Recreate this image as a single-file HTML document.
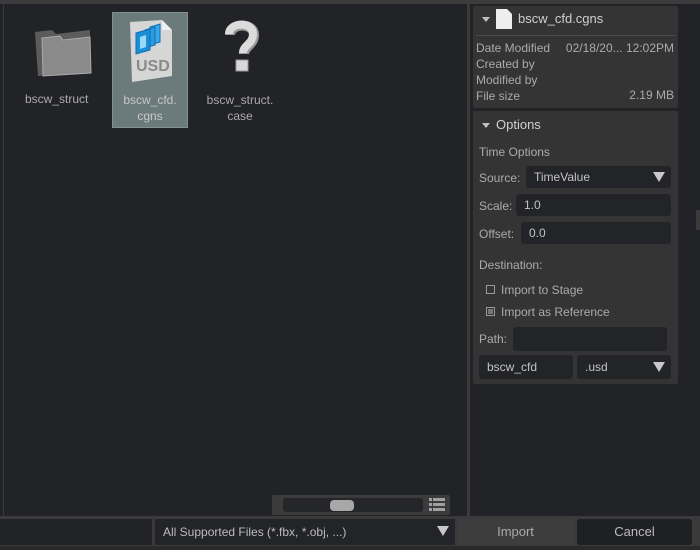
<!DOCTYPE html>
<html><head><style>
*{box-sizing:border-box;margin:0;padding:0}
body{width:700px;height:550px;background:#3a3a3a;font-family:"Liberation Sans",sans-serif;font-size:12px;color:#b8b8b8;position:relative;overflow:hidden}
.a{position:absolute}
.main{left:4px;top:4px;width:463px;height:512px;background:#222326}
.right{left:470px;top:4px;width:224px;height:512px;background:#222326}
.panel{background:#343434;border-radius:2px}
.lbl{font-size:12px;color:#ababab}
.inp{background:#232427;border-radius:3px;color:#c4c4c4;padding-left:8px;line-height:22px}
.tri{width:0;height:0;border-left:6px solid transparent;border-right:6px solid transparent;border-top:10px solid #c8c8c8}
.stri{width:0;height:0;border-left:4px solid transparent;border-right:4px solid transparent;border-top:5px solid #c0c0c0}
</style></head><body>
<div class="a" style="left:0;top:0;width:700px;height:4px;background:#3c3c3c"></div>
<div class="a main"></div>
<div class="a" style="left:0;top:4px;width:3px;height:512px;background:#222326"></div>
<div class="a right"></div>
<div class="a" style="left:694px;top:4px;width:6px;height:512px;background:#222326"></div>
<div class="a" style="left:696px;top:210px;width:4px;height:20px;background:#3a3a3a"></div>

<!-- files -->
<div class="a" style="left:112px;top:12px;width:76px;height:116px;background:#6b7a7b;border:1px solid #829293"></div>
<svg class="a" style="left:30px;top:22px" width="68" height="60" viewBox="0 0 68 60">
<path d="M5 10 L22 8 L26 12 L60 8 L60 50 L8 54 Z" fill="#5c5c5c"/>
<path d="M12 16 L30 14 L33 18 L60 15 L61 51 L13 54 Z" fill="#8a8a8a"/>
<path d="M12 16 L30 14 L33 18 L60 15 L61 51 L13 54 Z" fill="none" stroke="#aaa" stroke-width="1"/>
</svg>
<svg class="a" style="left:124px;top:18px" width="54" height="66" viewBox="0 0 54 66">
<path d="M6 4 L38 2 L48 12 L48 58 L8 64 Z" fill="#d6d6d6"/>
<path d="M38 2 L38 12 L48 12 Z" fill="#f0f0f0"/>
<polygon points="26,9 36,6 36,24 26,27" fill="#3aa8e8" stroke="#0d6fb0"/>
<polygon points="21,12 31,9 31,27 21,30" fill="#2a9be0" stroke="#0d6fb0"/>
<polygon points="12,15 26,11 26,32 12,36" fill="#1a8fd6" stroke="#0d6fb0"/>
<polygon points="16,19 22,17 22,29 16,31" fill="#9cd8f7"/>
<text x="12" y="53" font-family="Liberation Sans" font-weight="bold" font-size="16" fill="#8a8a8a">USD</text>
</svg>
<svg class="a" style="left:220px;top:18px" width="44" height="64" viewBox="0 0 44 64">
<path d="M10 17 C10 5 34 4 34 17 C34 27 24 28 24 36" fill="none" stroke="#9a9a9a" stroke-width="10" stroke-linecap="butt"/>
<path d="M9 16 C9 4 33 3 33 16 C33 26 23 27 23 35" fill="none" stroke="#dcdcdc" stroke-width="8"/>
<rect x="16" y="42" width="12" height="11" fill="#d8d8d8" stroke="#999"/>
</svg>
<div class="a lbl" style="left:25px;top:92px">bscw_struct</div>
<div class="a lbl" style="left:112px;top:92px;width:76px;text-align:center;line-height:16px;color:#c8c8c8">bscw_cfd.<br>cgns</div>
<div class="a lbl" style="left:198px;top:92px;width:84px;text-align:center;line-height:16px">bscw_struct.<br>case</div>

<!-- zoom slider -->
<div class="a" style="left:272px;top:495px;width:178px;height:20px;background:#3b3b3b;border-radius:2px"></div>
<div class="a" style="left:283px;top:498px;width:140px;height:14px;background:#252629;border-radius:3px"></div>
<div class="a" style="left:330px;top:500px;width:24px;height:11px;background:#a8a8a8;border-radius:4px"></div>
<div class="a" style="left:429px;top:498px;width:16px;height:14px;background:repeating-linear-gradient(#a0a0a0 0 3px,transparent 3px 5px)"></div>
<div class="a" style="left:432px;top:498px;width:1px;height:14px;background:#3b3b3b"></div>

<!-- info panel -->
<div class="a panel" style="left:473px;top:6px;width:205px;height:102px"></div>
<div class="a stri" style="left:482px;top:17px"></div>
<svg class="a" style="left:496px;top:9px" width="16" height="20"><path d="M0 0 L11 0 L16 5 L16 20 L0 20 Z" fill="#eee"/></svg>
<div class="a" style="left:518px;top:11px;color:#d0d0d0;font-size:13px">bscw_cfd.cgns</div>
<div class="a" style="left:476px;top:35px;width:200px;height:1px;background:#4a4a4a"></div>
<div class="a lbl" style="left:476px;top:40px;line-height:16px">Date Modified<br>Created by<br>Modified by<br>File size</div>
<div class="a lbl" style="left:560px;top:40px;width:114px;text-align:right;line-height:16px">02/18/20... 12:02PM</div>
<div class="a lbl" style="left:560px;top:88px;width:114px;text-align:right">2.19 MB</div>

<!-- options -->
<div class="a panel" style="left:473px;top:111px;width:205px;height:273px"></div>
<div class="a stri" style="left:482px;top:123px"></div>
<div class="a" style="left:496px;top:117px;color:#d0d0d0;font-size:13px">Options</div>
<div class="a lbl" style="left:479px;top:145px">Time Options</div>
<div class="a lbl" style="left:479px;top:171px">Source:</div>
<div class="a inp" style="left:526px;top:166px;width:145px;height:22px">TimeValue</div>
<div class="a tri" style="left:653px;top:172px"></div>
<div class="a lbl" style="left:479px;top:199px">Scale:</div>
<div class="a inp" style="left:516px;top:194px;width:155px;height:22px">1.0</div>
<div class="a lbl" style="left:479px;top:227px">Offset:</div>
<div class="a inp" style="left:521px;top:222px;width:150px;height:22px">0.0</div>
<div class="a lbl" style="left:479px;top:258px">Destination:</div>
<div class="a" style="left:486px;top:285px;width:9px;height:9px;border:1px solid #999"></div>
<div class="a lbl" style="left:501px;top:283px">Import to Stage</div>
<div class="a" style="left:486px;top:307px;width:9px;height:9px;border:1px solid #999;background:#777;box-shadow:inset 0 0 0 1px #343434"></div>
<div class="a lbl" style="left:501px;top:305px">Import as Reference</div>
<div class="a lbl" style="left:479px;top:332px">Path:</div>
<div class="a inp" style="left:513px;top:327px;width:154px;height:24px"></div>
<div class="a inp" style="left:479px;top:355px;width:94px;height:24px;line-height:24px">bscw_cfd</div>
<div class="a inp" style="left:577px;top:355px;width:94px;height:24px;line-height:24px">.usd</div>
<div class="a tri" style="left:653px;top:362px"></div>

<!-- bottom -->
<div class="a" style="left:0;top:519px;width:152px;height:26px;background:#222326"></div>
<div class="a inp" style="left:155px;top:519px;width:300px;height:26px;line-height:26px;border-radius:0;color:#bdbdbd">All Supported Files (*.fbx, *.obj, ...)</div>
<div class="a tri" style="left:437px;top:526px"></div>
<div class="a" style="left:457px;top:519px;width:117px;height:26px;background:#3d3d3d;border-radius:3px;text-align:center;line-height:26px;color:#aaa;font-size:13px">Import</div>
<div class="a" style="left:577px;top:519px;width:115px;height:26px;background:#1f2023;border-radius:3px;text-align:center;line-height:26px;color:#bbb;font-size:13px">Cancel</div>
<div class="a" style="left:0;top:546px;width:700px;height:4px;background:#2a2a2a"></div>
</body></html>
